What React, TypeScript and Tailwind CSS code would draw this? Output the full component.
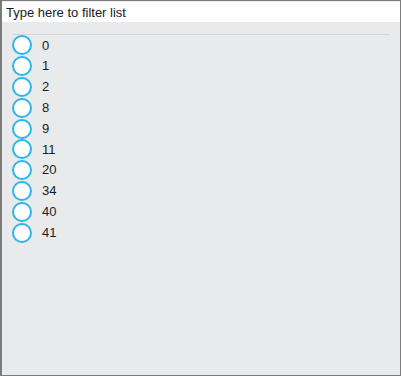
import React from "react";

const items = [0, 1, 2, 8, 9, 11, 20, 34, 40, 41];

export default function App() {
  return (
    <div
      className="w-[401px] h-[376px] border border-l-2 border-[#7b7b7b] bg-[#e9eaec] flex flex-col"
      style={{ fontFamily: '"Liberation Sans", Arial, sans-serif' }}
    >
      <input
        placeholder="Type here to filter list"
        className="h-[21px] w-full bg-white px-[4px] text-[13px] text-[#1a1a1a] placeholder:text-[#1a1a1a] outline-none border-t border-[#ececec]"
      />
      <div className="pl-[10px] pr-[10px] pt-[12px]">
        <div className="h-px bg-[#d5d6d8]" />
        <ul>
          {items.map((n) => (
            <li key={n} className="h-[20.8px] flex items-center">
              <span className="w-[20px] h-[20px] rounded-full border-2 border-[#2ab6e8] bg-white shrink-0" />
              <span className="ml-[10px] text-[13px] text-[#1a1a1a]">{n}</span>
            </li>
          ))}
        </ul>
      </div>
    </div>
  );
}
